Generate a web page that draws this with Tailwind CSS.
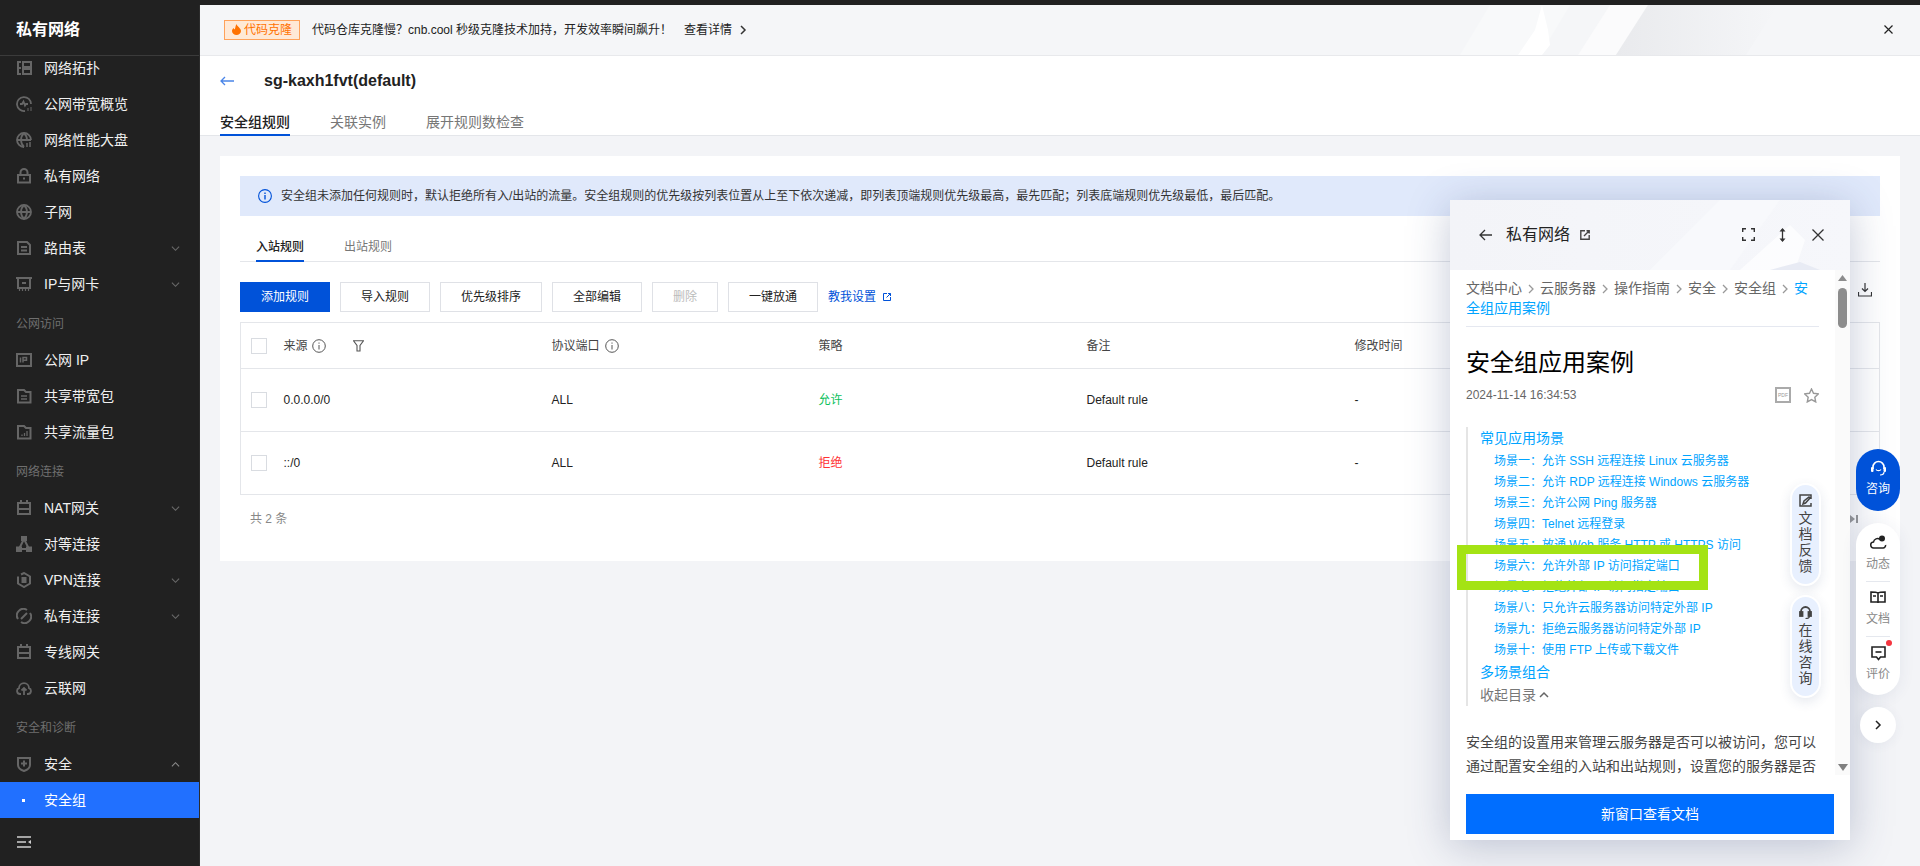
<!DOCTYPE html>
<html class="h-[866px] overflow-hidden">
<head>
    <meta charset="utf-8">
    <title>安全组</title>
    <script src="https://cdn.jsdelivr.net/npm/@tailwindcss/browser@4"></script>
</head>
<body class="h-[866px] w-[1920px] overflow-hidden bg-[#f3f4f7] text-xs text-[#222] [font-family:'Liberation_Sans','Noto_Sans_CJK_SC',sans-serif]">
<div class="relative flex h-[866px] flex-col overflow-hidden">
    <!-- top bar -->
    <div class="h-[5px] shrink-0 bg-[#212121]"></div>

    <div class="flex min-h-0 flex-1">
        <!-- sidebar -->
        <aside class="flex w-[200px] shrink-0 flex-col border-r border-[#2c2c2c] bg-[#212121] text-sm text-[#f0f0f0]">
            <div class="flex h-[51px] shrink-0 items-center border-b border-[#3b3b3b] pl-4 text-base font-bold text-white">私有网络</div>
            <nav class="min-h-0 flex-1 overflow-hidden">
                <a class="flex h-[30px] items-center pb-[6px] pl-4"><svg class="mr-3 h-4 w-4 text-[#666]" viewBox="0 0 16 16" fill="none" stroke="currentColor" stroke-width="2"><path d="M1 2h4M1 8h4M1 14h4M2 1v14"/><rect x="7" y="2" width="8" height="5"/><rect x="7" y="9" width="8" height="5"/></svg>网络拓扑</a>
                <a class="flex h-9 items-center pl-4"><svg class="mr-3 h-4 w-4 text-[#666]" viewBox="0 0 16 16" fill="none" stroke="currentColor" stroke-width="1.800"><path d="M9 15A7 7 0 1 1 15 8"/><path d="M4 8h2l1.500-2.500L9 9.500 10 8h2"/><path d="M12 12v3M15 11v4" stroke-width="1"/></svg>公网带宽概览</a>
                <a class="flex h-9 items-center pl-4"><svg class="mr-3 h-4 w-4 text-[#666]" viewBox="0 0 16 16" fill="none" stroke="currentColor" stroke-width="1.800"><path d="M8 15A7 7 0 1 1 15 8"/><path d="M1 8h14M8 1c-4 4-4 10 0 14M8 1c2 2 3 4 3 7"/><path d="M11 11v4M14 10v5" stroke-width="1.500"/></svg>网络性能大盘</a>
                <a class="flex h-9 items-center pl-4"><svg class="mr-3 h-4 w-4 text-[#666]" viewBox="0 0 16 16" fill="none" stroke="currentColor" stroke-width="2"><rect x="2" y="7" width="12" height="7.500"/><path d="M4.500 7V4.500a3.500 3.500 0 0 1 7 0V7"/><path d="M7 10.500h2"/></svg>私有网络</a>
                <a class="flex h-9 items-center pl-4"><svg class="mr-3 h-4 w-4 text-[#666]" viewBox="0 0 16 16" fill="none" stroke="currentColor" stroke-width="1.800"><circle cx="8" cy="8" r="7"/><path d="M1 8h14M8 1c-4 4-4 10 0 14M8 1c4 4 4 10 0 14"/></svg>子网</a>
                <a class="flex h-9 items-center pl-4"><svg class="mr-3 h-4 w-4 text-[#666]" viewBox="0 0 16 16" fill="none" stroke="currentColor" stroke-width="2"><path d="M2 2h9l3 3v9H2z"/><path d="M5 7h6M5 10.500h6"/></svg>路由表<svg class="ml-auto mr-[19px] h-[9px] w-[9px] text-[#6a6a6a]" viewBox="0 0 10 10" fill="none" stroke="currentColor" stroke-width="1.200"><path d="M1 3l4 4 4-4"/></svg></a>
                <a class="flex h-9 items-center pl-4"><svg class="mr-3 h-4 w-4 text-[#666]" viewBox="0 0 16 16" fill="none" stroke="currentColor" stroke-width="2"><path d="M0 2h16M2 2v10h12V2"/><path d="M6 7h4"/><path d="M3.500 12v3M6.500 12v3M9.500 12v3M12.500 12v3" stroke-width="1.200"/></svg>IP与网卡<svg class="ml-auto mr-[19px] h-[9px] w-[9px] text-[#6a6a6a]" viewBox="0 0 10 10" fill="none" stroke="currentColor" stroke-width="1.200"><path d="M1 3l4 4 4-4"/></svg></a>

                <div class="flex h-10 items-center pl-4 pt-1 text-xs text-[#6f6f6f]">公网访问</div>
                <a class="flex h-9 items-center pl-4"><svg class="mr-3 h-4 w-4 text-[#666]" viewBox="0 0 16 16"><path fill="currentColor" fill-rule="evenodd" d="M0 1h16v14H0zM2 3v10h12V3z"/><path d="M4.500 5.500v5M7 10.500v-5h3.500v2.700H7" fill="none" stroke="currentColor" stroke-width="1.500"/></svg>公网 IP</a>
                <a class="flex h-9 items-center pl-4"><svg class="mr-3 h-4 w-4 text-[#666]" viewBox="0 0 16 16" fill="none" stroke="currentColor" stroke-width="2"><path d="M2 14.500V2h6l2 2h4.500v10.500z"/><path d="M5 8h6M5 11h6" stroke-width="1.500"/></svg>共享带宽包</a>
                <a class="flex h-9 items-center pl-4"><svg class="mr-3 h-4 w-4 text-[#666]" viewBox="0 0 16 16" fill="none" stroke="currentColor" stroke-width="2"><path d="M2 14.500V2h6l2 2h4.500v10.500z"/><path d="M6 12v-1.500M8.500 12V9M11 12V7" stroke-width="1.300"/></svg>共享流量包</a>

                <div class="flex h-10 items-center pl-4 pt-1 text-xs text-[#6f6f6f]">网络连接</div>
                <a class="flex h-9 items-center pl-4"><svg class="mr-3 h-4 w-4 text-[#666]" viewBox="0 0 16 16" fill="none" stroke="currentColor" stroke-width="2"><rect x="2" y="3" width="12" height="11"/><path d="M5 0v3M11 0v3M2 9h12"/></svg>NAT网关<svg class="ml-auto mr-[19px] h-[9px] w-[9px] text-[#6a6a6a]" viewBox="0 0 10 10" fill="none" stroke="currentColor" stroke-width="1.200"><path d="M1 3l4 4 4-4"/></svg></a>
                <a class="flex h-9 items-center pl-4"><svg class="mr-3 h-4 w-4 text-[#666]" viewBox="0 0 16 16" fill="none" stroke="currentColor" stroke-width="2"><path d="M8 3L3 13h10z"/><rect x="6" y="1" width="4" height="3" fill="currentColor"/><rect x="1" y="11.500" width="4" height="3.500" fill="currentColor"/><rect x="11" y="11.500" width="4" height="3.500" fill="currentColor"/></svg>对等连接</a>
                <a class="flex h-9 items-center pl-4"><svg class="mr-3 h-4 w-4 text-[#666]" viewBox="0 0 16 16" fill="none" stroke="currentColor" stroke-width="2"><path d="M5 2.500L8 1l6 3.500v7L8 15l-6-3.500v-7"/><path d="M10.500 6H6.500v2h3v2h-4"/></svg>VPN连接<svg class="ml-auto mr-[19px] h-[9px] w-[9px] text-[#6a6a6a]" viewBox="0 0 10 10" fill="none" stroke="currentColor" stroke-width="1.200"><path d="M1 3l4 4 4-4"/></svg></a>
                <a class="flex h-9 items-center pl-4"><svg class="mr-3 h-4 w-4 text-[#666]" viewBox="0 0 16 16" fill="none" stroke="currentColor" stroke-width="2"><path d="M2 11A6.500 6.500 0 0 1 11 2M14 5a6.500 6.500 0 0 1-9 9"/><path d="M5 11l6-6"/></svg>私有连接<svg class="ml-auto mr-[19px] h-[9px] w-[9px] text-[#6a6a6a]" viewBox="0 0 10 10" fill="none" stroke="currentColor" stroke-width="1.200"><path d="M1 3l4 4 4-4"/></svg></a>
                <a class="flex h-9 items-center pl-4"><svg class="mr-3 h-4 w-4 text-[#666]" viewBox="0 0 16 16" fill="none" stroke="currentColor" stroke-width="2"><rect x="2" y="3" width="12" height="11"/><path d="M5 0v3M11 0v3M2 9h12"/></svg>专线网关</a>
                <a class="flex h-9 items-center pl-4"><svg class="mr-3 h-4 w-4 text-[#666]" viewBox="0 0 16 16" fill="none" stroke="currentColor" stroke-width="1.800"><path d="M5 14H4a3 3 0 0 1-1-5.800A5 5 0 0 1 13 8.200 3 3 0 0 1 12 14h-1"/><path d="M8 15V8M5.500 10.500L8 8l2.500 2.500"/></svg>云联网</a>

                <div class="flex h-10 items-center pl-4 pt-1 text-xs text-[#6f6f6f]">安全和诊断</div>
                <a class="flex h-9 items-center pl-4"><svg class="mr-3 h-4 w-4 text-[#666]" viewBox="0 0 16 16" fill="none" stroke="currentColor" stroke-width="2"><path d="M2 2h12v7c0 3-3 5-6 6-3-1-6-3-6-6z"/><path d="M5 7.500h6M8 4.500v6"/></svg>安全<svg class="ml-auto mr-[19px] h-[9px] w-[9px] text-[#8a8a8a]" viewBox="0 0 10 10" fill="none" stroke="currentColor" stroke-width="1.200"><path d="M1 7l4-4 4 4"/></svg></a>
                <a class="flex h-9 items-center bg-[#2170ff] pl-[22px] text-white"><span class="mr-[19px] h-[3px] w-[3px] bg-white"></span>安全组</a>
            </nav>
            <div class="flex h-12 shrink-0 items-center pl-4">
                <svg class="h-4 w-4 text-[#d0d0d0]" viewBox="0 0 16 16" fill="none" stroke="currentColor" stroke-width="1.500"><path d="M1 3h14M1 8h9M1 13h14"/><path d="M15 6v4l-3-2z" fill="currentColor" stroke="none"/></svg>
            </div>
        </aside>

        <!-- main -->
        <main class="flex min-w-0 flex-1 flex-col">
            <!-- announcement -->
            <div class="relative flex h-[51px] shrink-0 items-center overflow-hidden border-b border-[#e8e9ec] bg-[#f5f6f8] pb-px pl-6">
                <svg class="absolute left-[1200px] top-0 h-[50px] w-[520px]" viewBox="0 0 520 50">
                    <defs><linearGradient id="bandFade" x1="0" x2="1"><stop offset="0" stop-color="#e9eaed"/><stop offset="1" stop-color="#f5f6f8"/></linearGradient></defs>
                    <path d="M60 50L90 0h80l-30 50z" fill="#f8f9fa"/>
                    <path d="M118 50L135 25 142 0 148 25 150 40 142 50z" fill="#ffffff"/>
                    <path d="M178 50L210 0h38l-32 50z" fill="#fbfbfc"/>
                    <path d="M216 50L248 0h130l-32 50z" fill="url(#bandFade)"/>
                </svg>
                <span class="relative flex h-5 w-[76px] items-center justify-center gap-[3px] border border-[#ffa25a] bg-[#ffe9d6] text-[#ff7200]">
                    <svg class="h-[11px] w-[9px]" viewBox="0 0 9 11"><path fill="currentColor" d="M4.500 0C5 2.500 9 4 9 7a4.500 4 0 0 1-9 0c0-1.500 1-2.500 1.500-3 .3 1 .8 1.300 1.300 1.300C3.500 3.500 3.500 1.500 4.500 0z"/></svg>代码克隆
                </span>
                <span class="relative ml-3 w-[372px] whitespace-nowrap text-[#222]">代码仓库克隆慢？cnb.cool 秒级克隆技术加持，开发效率瞬间飙升！</span>
                <span class="relative flex items-center gap-2 text-[#222]">查看详情<svg class="h-[10px] w-[7px]" viewBox="0 0 7 10" fill="none" stroke="#333" stroke-width="1.500"><path d="M1 1l4 4-4 4"/></svg></span>
                <svg class="absolute right-[27px] top-[20px] h-[9px] w-[9px]" viewBox="0 0 9 9" fill="none" stroke="#222" stroke-width="1.200"><path d="M.5.500l8 8M8.500.500l-8 8"/></svg>
            </div>

            <!-- page header -->
            <div class="h-[80px] shrink-0 border-b border-[#e4e6ea] bg-white">
                <div class="flex h-[50px] items-center pl-5">
                    <svg class="h-[10px] w-[14px]" viewBox="0 0 14 10" fill="none" stroke="#4a85e8" stroke-width="1.300"><path d="M14 5H1M5 1L1 5l4 4"/></svg>
                    <h1 class="ml-[30px] text-base font-bold text-[#222]">sg-kaxh1fvt(default)</h1>
                </div>
                <div class="flex h-[30px] gap-10 pl-5 text-sm text-[#777]">
                    <span class="h-[30px] border-b-2 border-[#0052d9] pt-[6px] font-medium text-[#222]">安全组规则</span>
                    <span class="pt-[6px]">关联实例</span>
                    <span class="pt-[6px]">展开规则数检查</span>
                </div>
            </div>

            <!-- content -->
            <div class="px-5 pt-5">
                <div class="h-[405px] bg-white px-5 pt-5">
                    <div class="flex h-10 items-center bg-[#e0e9fb] pl-[18px]">
                        <svg class="mr-[9px] h-[14px] w-[14px]" viewBox="0 0 14 14" fill="none" stroke="#0052d9" stroke-width="1.100"><circle cx="7" cy="7" r="6.400"/><path d="M7 6v4.500" stroke-width="1.400"/><path d="M7 3.500v1.400" stroke-width="1.400"/></svg>
                        <span class="text-[#333]">安全组未添加任何规则时，默认拒绝所有入/出站的流量。安全组规则的优先级按列表位置从上至下依次递减，即列表顶端规则优先级最高，最先匹配；列表底端规则优先级最低，最后匹配。</span>
                    </div>

                    <div class="mt-4 flex h-[30px] gap-10 border-b border-[#e4e6ea] pl-4">
                        <span class="h-[30px] border-b-2 border-[#0052d9] pt-[7px] font-medium text-[#222]">入站规则</span>
                        <span class="pt-[7px] text-[#777]">出站规则</span>
                    </div>

                    <div class="mt-5 flex h-[30px] items-center gap-[10px]">
                        <button class="h-[30px] w-[90px] bg-[#0052d9] text-white">添加规则</button>
                        <button class="h-[30px] w-[90px] border border-[#dfe1e6] text-[#222]">导入规则</button>
                        <button class="h-[30px] w-[102px] border border-[#dfe1e6] text-[#222]">优先级排序</button>
                        <button class="h-[30px] w-[90px] border border-[#dfe1e6] text-[#222]">全部编辑</button>
                        <button class="h-[30px] w-[66px] border border-[#dfe1e6] text-[#bbb]">删除</button>
                        <button class="h-[30px] w-[90px] border border-[#dfe1e6] text-[#222]">一键放通</button>
                        <a class="flex items-center gap-[7px] text-[#0052d9]">教我设置<svg class="h-2 w-2" viewBox="0 0 8 8" fill="none" stroke="#0052d9" stroke-width="1"><path d="M4 .500H.500v7h7V4M3.500 4.500l4-4M5 .500h2.500V3"/></svg></a>
                        <svg class="ml-auto mr-2 mt-[-14px] h-[14px] w-[14px]" viewBox="0 0 14 14" fill="none" stroke="#333" stroke-width="1.200"><path d="M7 0v8M4 5.500L7 8.500l3-3M.500 9v4h13V9"/></svg>
                    </div>

                    <table class="mt-[10px] w-full table-fixed border border-[#e4e6ea] text-left">
                        <colgroup><col class="w-[43px]"><col class="w-[268px]"><col class="w-[267px]"><col class="w-[268px]"><col class="w-[268px]"><col></colgroup>
                        <thead>
                            <tr class="h-[46px] border-b border-[#e4e6ea] text-[#444]">
                                <th class="pl-[10px] font-normal"><span class="block h-4 w-4 border border-[#d9dce1]"></span></th>
                                <th class="font-normal"><span class="flex items-center">来源
                                    <svg class="ml-1 h-[14px] w-[14px]" viewBox="0 0 14 14" fill="none" stroke="#555" stroke-width="1"><circle cx="7" cy="7" r="6.300"/><path d="M7 6v4.500M7 3.500v1.200"/></svg>
                                    <svg class="ml-[27px] h-[12px] w-[11px]" viewBox="0 0 11 12" fill="none" stroke="#555" stroke-width="1.100"><path d="M.500.800h10L7 5.500V11L4 11V5.500z"/></svg></span></th>
                                <th class="font-normal"><span class="flex items-center">协议端口
                                    <svg class="ml-[5px] h-[14px] w-[14px]" viewBox="0 0 14 14" fill="none" stroke="#555" stroke-width="1"><circle cx="7" cy="7" r="6.300"/><path d="M7 6v4.500M7 3.500v1.200"/></svg></span></th>
                                <th class="font-normal">策略</th>
                                <th class="font-normal">备注</th>
                                <th class="font-normal">修改时间</th>
                            </tr>
                        </thead>
                        <tbody class="text-[#222]">
                            <tr class="h-[63px] border-b border-[#e4e6ea]">
                                <td class="pl-[10px]"><span class="block h-4 w-4 border border-[#d9dce1]"></span></td>
                                <td>0.0.0.0/0</td>
                                <td>ALL</td>
                                <td class="text-[#0abf5b]">允许</td>
                                <td>Default rule</td>
                                <td>-</td>
                            </tr>
                            <tr class="h-[63px]">
                                <td class="pl-[10px]"><span class="block h-4 w-4 border border-[#d9dce1]"></span></td>
                                <td>::/0</td>
                                <td>ALL</td>
                                <td class="text-[#f33]">拒绝</td>
                                <td>Default rule</td>
                                <td>-</td>
                            </tr>
                        </tbody>
                    </table>

                    <div class="flex items-center justify-between pl-[10px] pr-[22px] pt-4 text-[#888]">
                        <span>共 2 条</span>
                        <svg class="h-2 w-2" viewBox="0 0 8 8"><path fill="#999" d="M0 0l5 4-5 4zM6 0h2v8H6z"/></svg>
                    </div>
                </div>
            </div>
        </main>
    </div>

    <!-- floating docs panel -->
    <section class="absolute left-[1450px] top-[200px] flex h-[640px] w-[400px] flex-col bg-white shadow-[0_6px_40px_rgba(45,65,115,0.28)]">
        <header class="relative flex h-[70px] shrink-0 items-center overflow-hidden bg-gradient-to-r from-[#f3f4f8] to-[#f6f7fb] pb-[1px] pl-[29px] pr-[26px]">
            <svg class="absolute left-0 top-0 h-[70px] w-[400px]" viewBox="0 0 400 70">
                <path d="M200 70L270 0h60l-50 70z" fill="#f8f9fc"/>
                <path d="M290 70L340 25 355 40 345 70z" fill="#ffffff" opacity=".7"/>
                <path d="M320 70L350 62 370 70z" fill="#e8ebf4"/>
            </svg>
            <svg class="relative h-[12px] w-[13px]" viewBox="0 0 13 12" fill="none" stroke="#333" stroke-width="1.300"><path d="M13 6H1M6 1L1 6l5 5"/></svg>
            <span class="relative ml-[14px] text-base text-[#222]">私有网络</span>
            <svg class="relative ml-[10px] h-[10px] w-[10px]" viewBox="0 0 10 10" fill="none" stroke="#444" stroke-width="1.400"><path d="M5 .800H.800v8.400h8.400V5M4 6l5-5M6.500.800h2.700v2.700"/></svg>
            <svg class="relative ml-auto h-[13px] w-[13px]" viewBox="0 0 13 13" fill="none" stroke="#333" stroke-width="1.400"><path d="M.700 4V.700H4M9 .700h3.300V4M12.300 9v3.300H9M4 12.300H.700V9"/></svg>
            <svg class="relative ml-6 h-[14px] w-[7px]" viewBox="0 0 7 14" fill="none" stroke="#333" stroke-width="1.300"><path d="M3.500 1v12"/><path d="M.500 3.500L3.500 0l3 3.500zM.500 10.500L3.500 14l3-3.500z" fill="#333" stroke="none"/></svg>
            <svg class="relative ml-[26px] h-[12px] w-[12px]" viewBox="0 0 12 12" fill="none" stroke="#333" stroke-width="1.300"><path d="M.500.500l11 11M11.500.500l-11 11"/></svg>
        </header>

        <div class="flex h-[505px] shrink-0 overflow-hidden">
            <div class="min-w-0 flex-1 overflow-hidden pl-4 pr-4 pt-2">
                <nav class="border-b border-[#e5e8f0] pb-2 text-sm leading-5 text-[#666]">
                    <span>文档中心</span><svg class="mx-[5px] inline h-[10px] w-[8px]" viewBox="0 0 8 10" fill="none" stroke="#999" stroke-width="1.300"><path d="M2 1l4 4-4 4"/></svg><span>云服务器</span><svg class="mx-[5px] inline h-[10px] w-[8px]" viewBox="0 0 8 10" fill="none" stroke="#999" stroke-width="1.300"><path d="M2 1l4 4-4 4"/></svg><span>操作指南</span><svg class="mx-[5px] inline h-[10px] w-[8px]" viewBox="0 0 8 10" fill="none" stroke="#999" stroke-width="1.300"><path d="M2 1l4 4-4 4"/></svg><span>安全</span><svg class="mx-[5px] inline h-[10px] w-[8px]" viewBox="0 0 8 10" fill="none" stroke="#999" stroke-width="1.300"><path d="M2 1l4 4-4 4"/></svg><span>安全组</span><svg class="mx-[5px] inline h-[10px] w-[8px]" viewBox="0 0 8 10" fill="none" stroke="#999" stroke-width="1.300"><path d="M2 1l4 4-4 4"/></svg><span class="text-[#00a4ff]">安全组应用案例</span>
                </nav>
                <h2 class="mt-5 text-2xl leading-8 text-black">安全组应用案例</h2>
                <div class="mt-[6px] flex h-5 items-center justify-between text-[#666]">
                    <span>2024-11-14 16:34:53</span>
                    <span class="flex items-center gap-[13px]">
                        <span class="flex h-[16px] w-[16px] items-center justify-center border-2 border-[#aaa] text-[5px] leading-none text-[#999]">PDF</span>
                        <svg class="h-[15px] w-[15px]" viewBox="0 0 15 15" fill="none" stroke="#999" stroke-width="1.400"><path d="M7.500 1l2 4.300 4.800.6-3.500 3.300.9 4.700-4.200-2.300-4.200 2.300.9-4.700L.700 5.900l4.800-.6z"/></svg>
                    </span>
                </div>
                <div class="mt-[22px] border-l-2 border-[#e5e5e5] pb-px pl-3 text-[#00a4ff]">
                    <div class="h-[23px] text-sm leading-[23px]">常见应用场景</div>
                    <ul class="mt-px pl-[14px] leading-[21px]">
                        <li>场景一：允许 SSH 远程连接 Linux 云服务器</li>
                        <li>场景二：允许 RDP 远程连接 Windows 云服务器</li>
                        <li>场景三：允许公网 Ping 服务器</li>
                        <li>场景四：Telnet 远程登录</li>
                        <li>场景五：放通 Web 服务 HTTP 或 HTTPS 访问</li>
                        <li>场景六：允许外部 IP 访问指定端口</li>
                        <li>场景七：拒绝外部 IP 访问指定端口</li>
                        <li>场景八：只允许云服务器访问特定外部 IP</li>
                        <li>场景九：拒绝云服务器访问特定外部 IP</li>
                        <li>场景十：使用 FTP 上传或下载文件</li>
                    </ul>
                    <div class="h-[23px] text-sm leading-[23px]">多场景组合</div>
                    <div class="flex h-[21px] items-center gap-[3px] text-sm text-[#777]">收起目录<svg class="h-[7px] w-[10px]" viewBox="0 0 10 7" fill="none" stroke="#666" stroke-width="1.500"><path d="M1 6l4-4 4 4"/></svg></div>
                </div>
                <p class="mt-6 text-sm leading-6 text-[#444]">安全组的设置用来管理云服务器是否可以被访问，您可以通过配置安全组的入站和出站规则，设置您的服务器是否可以被访问。</p>
            </div>
            <!-- scrollbar -->
            <div class="flex w-[15px] shrink-0 flex-col items-start bg-[#fafafa] pl-[3px] pt-[5px]">
                <svg class="h-[6px] w-[9px]" viewBox="0 0 9 6"><path fill="#8c8c8c" d="M4.500 0L9 6H0z"/></svg>
                <div class="mt-[7px] h-[40px] w-[9px] rounded-full bg-[#8c8c8c]"></div>
                <svg class="mb-1 mt-auto h-[7px] w-[10px]" viewBox="0 0 10 7"><path fill="#808080" d="M0 0h10L5 7z"/></svg>
            </div>
        </div>

        <div class="px-4 pt-[19px]">
            <button class="h-10 w-full bg-[#006eff] text-sm text-white">新窗口查看文档</button>
        </div>

        <!-- feedback pills -->
        <div class="absolute left-[340px] top-[283px] flex h-[103px] w-[31px] flex-col items-center rounded-full border-2 border-white bg-[#e8f0fe] pt-[9px] text-sm leading-4 text-[#444] shadow-[0_4px_12px_rgba(50,70,120,0.12)]">
            <svg class="mb-[3px] h-[13px] w-[13px]" viewBox="0 0 13 13" fill="none" stroke="#444" stroke-width="1.500"><path d="M12 5V1H1v11h11V9M4 10l1-3 5-4 1 1-4.500 5z"/></svg>
            <span>文</span><span>档</span><span>反</span><span>馈</span>
        </div>
        <div class="absolute left-[340px] top-[395px] flex h-[103px] w-[31px] flex-col items-center rounded-full border-2 border-white bg-[#e8f0fe] pt-[9px] text-sm leading-4 text-[#444] shadow-[0_4px_12px_rgba(50,70,120,0.12)]">
            <svg class="mb-[3px] h-[13px] w-[13px]" viewBox="0 0 13 13" fill="none" stroke="#444" stroke-width="1.800"><path d="M2 7V5.500a4.500 4.500 0 0 1 9 0V7"/><rect x="1" y="6" width="2.500" height="4" fill="#444"/><rect x="9.500" y="6" width="2.500" height="4" fill="#444"/><path d="M10.500 10c0 2-2 2.500-4 2.500" stroke-width="1.200"/></svg>
            <span>在</span><span>线</span><span>咨</span><span>询</span>
        </div>
    </section>

    <!-- green annotation box -->
    <div class="absolute left-[1457px] top-[545px] h-[45px] w-[251px] border-[9px] border-[#a4e314]"></div>

    <!-- right helper rail -->
    <div class="absolute left-[1856px] top-[449px] flex h-[62px] w-[44px] flex-col items-center rounded-[22px] bg-[#0052d9] pt-[11px] text-white">
        <svg class="h-[17px] w-[17px]" viewBox="0 0 17 17" fill="none" stroke="#fff" stroke-width="1.600"><path d="M3 9V7a5.500 5.500 0 0 1 11 0v2"/><rect x="1" y="7" width="2.500" height="5" rx="1" fill="#fff" stroke="none"/><rect x="13.500" y="7" width="2.500" height="5" rx="1" fill="#fff" stroke="none"/><path d="M6 9.500c1 1.500 4 1.500 5 0M14 12c0 2-2 3-4 3" stroke-width="1.200"/></svg>
        <span class="mt-[4px]">咨询</span>
    </div>
    <div class="absolute left-[1856px] top-[523px] flex h-[172px] w-[44px] flex-col items-center rounded-[22px] bg-white text-[#888] shadow-[0_2px_16px_rgba(50,70,120,0.08)]">
        <svg class="mt-[12px] h-[15px] w-[17px]" viewBox="0 0 17 15" fill="none" stroke="#222" stroke-width="1.500"><path d="M10 4.500A4 4 0 0 0 3.500 7 3 3 0 0 0 4 13h9a2.500 2.500 0 0 0 2.500-3"/><circle cx="12" cy="3.500" r="3" fill="#222" stroke="none"/></svg>
        <span class="mt-[6px]">动态</span>
        <span class="mt-[9px] h-px w-6 bg-[#e5e8ee]"></span>
        <svg class="mt-[9px] h-[13px] w-[16px]" viewBox="0 0 16 13" fill="none" stroke="#222" stroke-width="1.600"><path d="M8 2v10M8 2C6.500 1 3 1 1 1v10h7M8 2c1.500-1 5-1 7-1v10H8"/><path d="M3 5h3M10 5h3"/></svg>
        <span class="mt-[7px]">文档</span>
        <span class="mt-[9px] h-px w-6 bg-[#e5e8ee]"></span>
        <div class="relative mt-[9px]">
            <svg class="block h-[15px] w-[15px]" viewBox="0 0 15 15" fill="none" stroke="#222" stroke-width="1.600"><path d="M1 1h13v10H9.500L7.500 13.500 5.500 11H1z"/><path d="M4.500 6h6"/></svg>
            <span class="absolute left-[15px] top-[-6px] h-[6px] w-[6px] rounded-full bg-[#f5353f]"></span>
        </div>
        <span class="mt-[5px]">评价</span>
    </div>
    <div class="absolute left-[1860px] top-[707px] flex h-9 w-9 items-center justify-center rounded-full bg-white shadow-[0_2px_12px_rgba(50,70,120,0.06)]">
        <svg class="h-[10px] w-[7px]" viewBox="0 0 7 10" fill="none" stroke="#222" stroke-width="1.500"><path d="M1 1l4 4-4 4"/></svg>
    </div>
</div>
</body>
</html>
